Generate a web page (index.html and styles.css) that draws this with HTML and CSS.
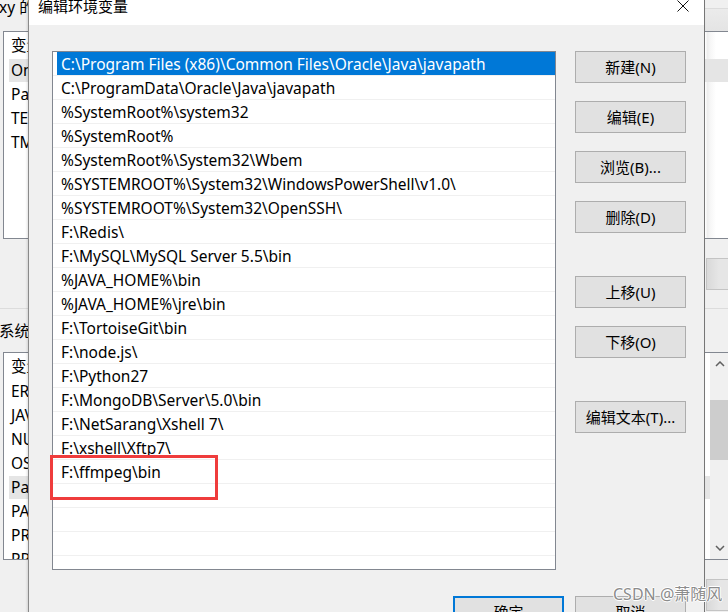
FILE: index.html
```html
<!DOCTYPE html>
<html lang="zh-CN">
<head>
<meta charset="utf-8">
<title>编辑环境变量</title>
<link rel="stylesheet" href="styles.css">
</head>
<body>
<div class="desktop">
  <div class="bgwin">
    <div class="bg-head">
      <div class="bg-title">xy 的用户变量(U)</div>
      <div class="bg-ledge"></div>
    </div>
    <div class="bg-list user">
      <div class="bg-listhead">变量</div>
      <div class="bg-row sel"><span>OneDrive</span></div>
      <div class="bg-row"><span>Path</span></div>
      <div class="bg-row"><span>TEMP</span></div>
      <div class="bg-row"><span>TMP</span></div>
    </div>
    <div class="bg-btnrow"><div class="bg-btn">删除(D)</div></div>
    <div class="bg-sep"></div>
    <div class="bg-label">系统变量(S)</div>
    <div class="bg-list sys">
      <div class="bg-listcol">
        <div class="bg-listhead">变量</div>
        <div class="bg-row"><span>ERLANG_HOME</span></div>
        <div class="bg-row"><span>JAVA_HOME</span></div>
        <div class="bg-row"><span>NUMBER_OF_PROCESSORS</span></div>
        <div class="bg-row"><span>OS</span></div>
        <div class="bg-row sel"><span>Path</span></div>
        <div class="bg-row"><span>PATHEXT</span></div>
        <div class="bg-row"><span>PROCESSOR_ARCHITECTURE</span></div>
        <div class="bg-row"><span>PROCESSOR_IDENTIFIER</span></div>
      </div>
      <div class="vscroll">
        <svg class="arrow" width="10" height="6" viewBox="0 0 10 6"><path d="M1 5 L5 1 L9 5" fill="none" stroke="#606060" stroke-width="1.5"/></svg>
        <div class="track"><div class="thumb"></div></div>
        <svg class="arrow" width="10" height="6" viewBox="0 0 10 6"><path d="M1 1 L5 5 L9 1" fill="none" stroke="#606060" stroke-width="1.5"/></svg>
      </div>
    </div>
    <div class="bg-btnrow"><div class="bg-btn">删除(L)</div></div>
  </div>

  <div class="dialog">
    <div class="titlebar">
      <span class="dlg-title">编辑环境变量</span>
      <svg class="close" width="12" height="12" viewBox="0 0 12 12"><path d="M0.5 0.5 L11.5 11.5 M11.5 0.5 L0.5 11.5" stroke="#111" stroke-width="1" fill="none"/></svg>
    </div>
    <div class="dlg-body">
      <div class="pathlist">
        <div class="prow sel"><span class="cell">C:\Program Files (x86)\Common Files\Oracle\Java\javapath</span></div>
        <div class="prow"><span class="cell">C:\ProgramData\Oracle\Java\javapath</span></div>
        <div class="prow"><span class="cell">%SystemRoot%\system32</span></div>
        <div class="prow"><span class="cell">%SystemRoot%</span></div>
        <div class="prow"><span class="cell">%SystemRoot%\System32\Wbem</span></div>
        <div class="prow"><span class="cell">%SYSTEMROOT%\System32\WindowsPowerShell\v1.0\</span></div>
        <div class="prow"><span class="cell">%SYSTEMROOT%\System32\OpenSSH\</span></div>
        <div class="prow"><span class="cell">F:\Redis\</span></div>
        <div class="prow"><span class="cell">F:\MySQL\MySQL Server 5.5\bin</span></div>
        <div class="prow"><span class="cell">%JAVA_HOME%\bin</span></div>
        <div class="prow"><span class="cell">%JAVA_HOME%\jre\bin</span></div>
        <div class="prow"><span class="cell">F:\TortoiseGit\bin</span></div>
        <div class="prow"><span class="cell">F:\node.js\</span></div>
        <div class="prow"><span class="cell">F:\Python27</span></div>
        <div class="prow"><span class="cell">F:\MongoDB\Server\5.0\bin</span></div>
        <div class="prow"><span class="cell">F:\NetSarang\Xshell 7\</span></div>
        <div class="prow"><span class="cell">F:\xshell\Xftp7\</span></div>
        <div class="prow"><span class="cell">F:\ffmpeg\bin</span></div>
        <div class="prow"><span class="cell"></span></div>
        <div class="prow"><span class="cell"></span></div>
        <div class="prow"><span class="cell"></span></div>
        <div class="prow"><span class="cell"></span></div>
      </div>
      <div class="btncol">
        <div class="btn">新建(N)</div>
        <div class="btn">编辑(E)</div>
        <div class="btn">浏览(B)...</div>
        <div class="btn">删除(D)</div>
        <div class="btn gap-big">上移(U)</div>
        <div class="btn">下移(O)</div>
        <div class="btn gap-big">编辑文本(T)...</div>
      </div>
    </div>
    <div class="dlg-foot">
      <div class="btn default">确定</div>
      <div class="btn">取消</div>
    </div>
    <div class="mark"></div>
  </div>

  <div class="watermark">CSDN @萧随风</div>
</div>
</body>
</html>
```

FILE: styles.css
```css
* { box-sizing: border-box; }

html, body {
  margin: 0;
  padding: 0;
  background: #f0f0f0;
}

body {
  font-family: "Noto Sans", "Noto Sans CJK SC", sans-serif;
  font-size: 15.5px;
  color: #000;
}

.desktop {
  position: relative;
  width: 728px;
  height: 612px;
  overflow: hidden;
  background: #f0f0f0;
}

/* ---------- background window ---------- */
.bgwin {
  display: flex;
  flex-direction: column;
  width: 100%;
  height: 100%;
}

.bg-head {
  display: flex;
  height: 31px;
}

.bg-title {
  flex: 1;
  line-height: 16px;
  margin-top: -1px;
  margin-left: -1px;
  white-space: nowrap;
}

.bg-ledge {
  width: 23px;
  margin-top: 8px;
  border-top: 1px solid #dcdcdc;
  background: linear-gradient(#ebebeb, #e4e4e4);
}

.bg-list {
  margin-left: 3px;
  border: 1px solid #828790;
  background: #fff;
  height: 208px;
  overflow: hidden;
  flex-shrink: 0;
}

.bg-list.user {
  width: 780px;
  background: linear-gradient(90deg, #fff 0, #fff 702px, #ececec 703px, #f6f6f6 706px, #fff 712px);
}

.bg-listhead {
  height: 27px;
  line-height: 27px;
  padding-left: 7px;
  white-space: nowrap;
}

.bg-row {
  height: 24px;
  padding-left: 5px;
  white-space: nowrap;
}

.bg-row span {
  display: block;
  height: 23px;
  line-height: 23px;
  padding-left: 2px;
}

.bg-row.sel span {
  background: #e5e5e5;
}

.bg-btnrow {
  display: flex;
  justify-content: flex-end;
  margin-top: 19px;
  margin-right: -90px;
  flex-shrink: 0;
}

.bg-btn {
  width: 112px;
  height: 32px;
  border: 1px solid #c4c4c4;
  background: linear-gradient(90deg, #d9d9d9, #e6e6e6 12px, #e6e6e6);
  line-height: 30px;
  padding-left: 40px;
  white-space: nowrap;
  color: #e6e6e6;
}

.bg-sep {
  margin-top: 18px;
  height: 1px;
  background: #dcdcdc;
  flex-shrink: 0;
}

.bg-label {
  height: 43px;
  line-height: 44px;
  margin-left: -1px;
  white-space: nowrap;
  flex-shrink: 0;
}

.bg-list.sys {
  width: 726px;
  display: flex;
  border-right: none;
}

.bg-listcol {
  flex: 1;
  overflow: hidden;
}

.vscroll {
  width: 19px;
  background: #f0f0f0;
  display: flex;
  flex-direction: column;
  align-items: center;
}

.vscroll .arrow {
  margin: 8px 0;
  flex-shrink: 0;
}

.vscroll .track {
  flex: 1;
  width: 100%;
}

.vscroll .thumb {
  margin-top: 25px;
  height: 60px;
  width: 100%;
  background: #cdcdcd;
}

/* ---------- dialog ---------- */
.dialog {
  position: absolute;
  left: 28px;
  top: 0;
  width: 677px;
  height: 660px;
  background: #f0f0f0;
  border-left: 1px solid #8a8a8a;
  border-right: 1px solid #767676;
  box-shadow: -1px 0 2px rgba(0, 0, 0, 0.12);
}

.titlebar {
  display: flex;
  align-items: flex-start;
  height: 25px;
  background: #fff;
}

.dlg-title {
  margin-left: 9px;
  margin-top: -2px;
  line-height: 16px;
  font-size: 15px;
}

.close {
  margin-left: auto;
  margin-right: 15px;
}

.dlg-body {
  display: flex;
  gap: 19px;
  padding: 26px 18px 0 23px;
}

.pathlist {
  width: 504px;
  height: 519px;
  border: 1px solid #828790;
  background: #fff;
  overflow: hidden;
  flex-shrink: 0;
}

.prow {
  height: 24px;
  padding-left: 4px;
  border-bottom: 1px solid #f0f0f0;
}

.prow .cell {
  display: block;
  height: 23px;
  line-height: 24px;
  padding-left: 4px;
  white-space: nowrap;
}

.prow.sel .cell {
  background: #0078d7;
  color: #fff;
}

.btncol {
  display: flex;
  flex-direction: column;
  gap: 18px;
  width: 111px;
}

.btn {
  width: 111px;
  height: 32px;
  border: 1px solid #adadad;
  background: #e1e1e1;
  text-align: center;
  line-height: 30px;
  white-space: nowrap;
  font-size: 15px;
}

.btn.gap-big {
  margin-top: 25px;
}

.btn.default {
  border: 2px solid #0078d7;
  line-height: 28px;
}

.dlg-foot {
  display: flex;
  justify-content: flex-end;
  gap: 11px;
  padding-right: 18px;
  margin-top: 26px;
}

.mark {
  position: absolute;
  left: 21px;
  top: 455px;
  width: 168px;
  height: 45px;
  border: 3px solid #ef3c3c;
}

.watermark {
  position: absolute;
  left: 613px;
  top: 584px;
  font-size: 16px;
  line-height: 20px;
  color: #8c8c8c;
  white-space: nowrap;
  text-shadow: 1px 0 0 #fff, -1px 0 0 #fff, 0 1px 0 #fff, 0 -1px 0 #fff;
}
```
